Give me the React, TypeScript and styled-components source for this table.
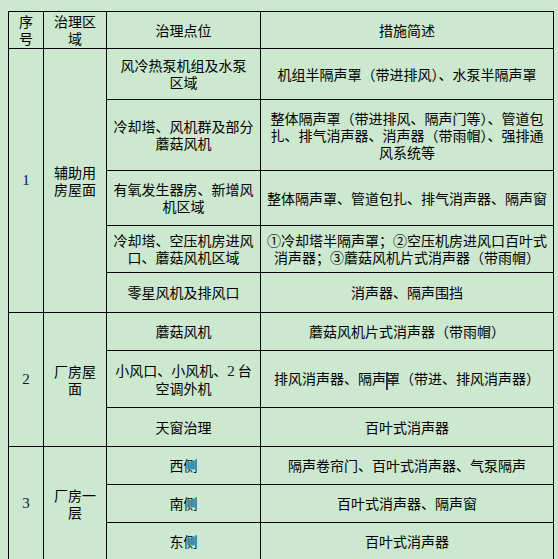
import React from "react";
import styled, { createGlobalStyle } from "styled-components";

const Global = createGlobalStyle`
  html, body {
    margin: 0;
    padding: 0;
    background: #cce8cf;
  }
  body {
    font-family: "Noto Sans CJK SC", "Noto Sans", sans-serif;
    color: #000;
  }
`;

const Page = styled.div`
  padding: 11px 0 0 8px;
`;

const Grid = styled.div`
  display: grid;
  grid-template-columns: 34px 62px 153px 292px;
  grid-template-rows: 36px 50px 70px 54px 46px 39px 37px 56px 38px 37px 37px 37px;
  gap: 1px;
  padding: 1px;
  background: #000;
  width: fit-content;
`;

const Cell = styled.div<{ $span?: number }>`
  grid-row: span ${(p) => p.$span ?? 1};
  background: #cce8cf;
  display: flex;
  align-items: center;
  justify-content: center;
  text-align: center;
  font-size: 14px;
  line-height: 17px;
  white-space: nowrap;
  font-family: "Noto Sans CJK SC", sans-serif;
`;

const Num = styled.span`
  font-family: "Liberation Serif", "Times New Roman", serif;
  font-size: 15px;
  color: #101828;
`;

const Caret = styled.span`
  display: inline-block;
  position: relative;
  width: 0;
  height: 14px;
  vertical-align: middle;
  &::after {
    content: "";
    position: absolute;
    left: 0;
    top: -2px;
    width: 2px;
    height: 18px;
    background: #3b2c4c;
  }
`;

type Line = React.ReactNode;
type Item = { loc: Line[]; measure: Line[] };
type Group = { no: string; area: string[]; items: Item[] };

const groups: Group[] = [
  {
    no: "1",
    area: ["辅助用", "房屋面"],
    items: [
      { loc: ["风冷热泵机组及水泵", "区域"], measure: ["机组半隔声罩（带进排风）、水泵半隔声罩"] },
      {
        loc: ["冷却塔、风机群及部分", "蘑菇风机"],
        measure: ["整体隔声罩（带进排风、隔声门等）、管道包", "扎、排气消声器、消声器（带雨帽）、强排通", "风系统等"],
      },
      { loc: ["有氧发生器房、新增风", "机区域"], measure: ["整体隔声罩、管道包扎、排气消声器、隔声窗"] },
      {
        loc: ["冷却塔、空压机房进风", "口、蘑菇风机区域"],
        measure: ["①冷却塔半隔声罩；②空压机房进风口百叶式", "消声器；③蘑菇风机片式消声器（带雨帽）"],
      },
      { loc: ["零星风机及排风口"], measure: ["消声器、隔声围挡"] },
    ],
  },
  {
    no: "2",
    area: ["厂房屋", "面"],
    items: [
      { loc: ["蘑菇风机"], measure: ["蘑菇风机片式消声器（带雨帽）"] },
      {
        loc: [
          <>
            小风口、小风机、<Num>2</Num> 台
          </>,
          "空调外机",
        ],
        measure: [
          <>
            排风消声器、隔声<Caret />罩（带进、排风消声器）
          </>,
        ],
      },
      { loc: ["天窗治理"], measure: ["百叶式消声器"] },
    ],
  },
  {
    no: "3",
    area: ["厂房一", "层"],
    items: [
      { loc: ["西侧"], measure: ["隔声卷帘门、百叶式消声器、气泵隔声"] },
      { loc: ["南侧"], measure: ["百叶式消声器、隔声窗"] },
      { loc: ["东侧"], measure: ["百叶式消声器"] },
    ],
  },
];

const Lines: React.FC<{ lines: Line[] }> = ({ lines }) => (
  <div>
    {lines.map((l, i) => (
      <div key={i}>{l}</div>
    ))}
  </div>
);

export default function App() {
  return (
    <Page>
      <Global />
      <Grid>
        <Cell>
          <Lines lines={["序", "号"]} />
        </Cell>
        <Cell>
          <Lines lines={["治理区", "域"]} />
        </Cell>
        <Cell>治理点位</Cell>
        <Cell>措施简述</Cell>
        {groups.map((g) => (
          <React.Fragment key={g.no}>
            <Cell $span={g.items.length}>
              <Num>{g.no}</Num>
            </Cell>
            <Cell $span={g.items.length}>
              <Lines lines={g.area} />
            </Cell>
            {g.items.map((it, i) => (
              <React.Fragment key={i}>
                <Cell>
                  <Lines lines={it.loc} />
                </Cell>
                <Cell>
                  <Lines lines={it.measure} />
                </Cell>
              </React.Fragment>
            ))}
          </React.Fragment>
        ))}
      </Grid>
    </Page>
  );
}
